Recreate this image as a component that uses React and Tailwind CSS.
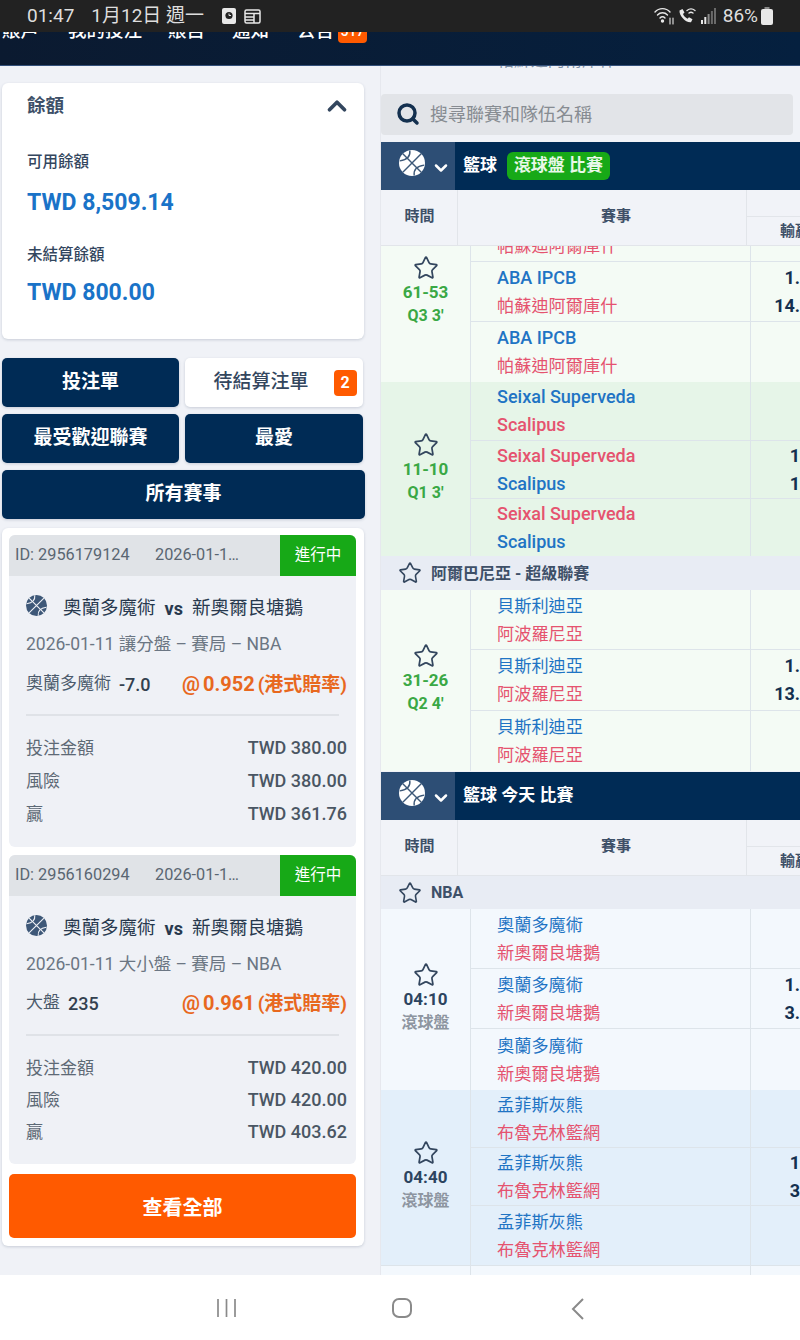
import { ChevronDown, ChevronUp, Search, Star } from "lucide-react";

const blue = "text-[#1f74c4]";
const pink = "text-[#e5536f]";

function BallIcon({ size, fg, line, className }) {
  return (
    <svg className={className} width={size} height={size} viewBox="0 0 24 24" fill="none">
      <circle cx="12" cy="12" r="12" fill={fg} />
      <g stroke={line} strokeWidth="1.300">
        <path d="M3.500 3.500 20.500 20.500M20.500 3.500 3.500 20.500" />
        <path d="M10 .5C10.500 5 8 9 .8 10" />
        <path d="M23.200 14C16 15 13.500 19 14 23.500" />
      </g>
    </svg>
  );
}

function StatusBar() {
  return (
    <div className="flex h-8 shrink-0 items-center bg-[#222222] pl-[27px] pr-[27px] text-[19px] text-[#dedede]">
      <span>01:47</span>
      <span className="ml-[17px]">1月12日 週一</span>
      <svg className="ml-[18px]" width="14" height="16" viewBox="0 0 14 16">
        <rect width="14" height="16" rx="2" fill="#e8e8e8" />
        <circle cx="7" cy="7.500" r="3.600" fill="#222" />
        <path d="M7 5.500v2h2" stroke="#e8e8e8" strokeWidth="1" fill="none" />
      </svg>
      <svg className="ml-[8px]" width="17" height="15" viewBox="0 0 17 15" fill="none" stroke="#e8e8e8" strokeWidth="1.500">
        <rect x="1" y="1" width="15" height="13" rx="1.500" />
        <path d="M1 4.500h15M1 8h9M1 11h9M10 4.500V14" />
      </svg>
      <div className="flex-1" />
      <svg width="22" height="20" viewBox="0 0 22 20" fill="none" stroke="#e8e8e8" strokeWidth="1.400" strokeLinecap="round">
        <path d="M1 6c4-4.500 11-4.500 15 0M3.500 9c2.800-3 7.200-3 10 0M6 12c1.500-1.600 3.500-1.600 5 0" />
        <circle cx="8.500" cy="15" r="1" fill="#e8e8e8" />
        <path d="M16 12v6M19 18v-6" strokeWidth="1.100" />
      </svg>
      <svg className="ml-[2px]" width="18" height="18" viewBox="0 0 18 18" fill="none">
        <path d="M1.500 3.500 4.500 2l2 3.500-1.500 1.500c.8 2 2.500 3.800 4.500 4.700l1.500-1.500 3.500 2-1.500 3C8 16 1 9 1.500 3.500Z" fill="#e8e8e8" />
        <path d="M9 3.500c2.500-2 5.500-2 8 0M11 6c1.300-1 2.700-1 4 0" stroke="#e8e8e8" strokeWidth="1.300" strokeLinecap="round" />
      </svg>
      <svg className="ml-[5px]" width="15" height="16" viewBox="0 0 15 16">
        <rect x="0" y="12" width="2" height="4" fill="#e8e8e8" />
        <rect x="3.300" y="9" width="2" height="7" fill="#e8e8e8" />
        <rect x="6.600" y="6" width="2" height="10" fill="#8a8a8a" />
        <rect x="9.900" y="3" width="2" height="13" fill="#6a6a6a" />
        <rect x="13" y="0" width="2" height="16" fill="#6a6a6a" />
      </svg>
      <span className="ml-[7px]">86%</span>
      <svg className="ml-[3px]" width="12" height="18" viewBox="0 0 12 18">
        <rect x="3.500" y="0" width="5" height="3" fill="#8a8a8a" />
        <rect x="0" y="2" width="12" height="16" rx="2" fill="#e8e8e8" />
      </svg>
    </div>
  );
}

function NavBar() {
  return (
    <div className="h-[34px] shrink-0 overflow-hidden border-b border-[#33507a] bg-gradient-to-r from-[#0b1a30] to-[#05203f]">
      <div className="-mt-[13px] flex h-[24px] items-center text-[18.500px] font-medium leading-[18px] text-white">
        <span className="ml-[2px] w-[66px]">賬戶</span>
        <span className="w-[100px]">我的投注</span>
        <span className="w-[64px]">賬目</span>
        <span className="w-[65px]">通知</span>
        <span className="w-[41px]">公告</span>
        <span className="h-[24px] w-[29px] rounded-[4px] bg-[#ff5a00] text-center text-[14px] leading-[24px]">517</span>
      </div>
    </div>
  );
}

function NavButton({ children, light, badge, wide, right }) {
  return (
    <div
      className={`flex h-[49px] items-center justify-center rounded-[5px] text-[19px] font-bold shadow-[0_1px_3px_rgba(40,60,90,0.2)] ${
        light ? "bg-white text-[#33465e]" : "bg-[#002b55] text-white"
      } ${wide ? "w-[363px]" : right ? "w-[178px]" : "w-[177px]"}`}
    >
      <span className={badge ? "ml-[22px] font-medium" : ""}>{children}</span>
      {badge && (
        <span className="ml-[25px] flex h-[26px] w-[23px] items-center justify-center rounded-[4px] bg-[#ff5a00] text-[16px] text-white">
          {badge}
        </span>
      )}
    </div>
  );
}

function Ticket({ id, market, sel, line, odds, stake, win, tight }) {
  return (
    <div className="overflow-hidden rounded-[6px] bg-[#eff1f6]">
      <div className="flex h-[41px] bg-[#e0e3e7] text-[16.300px] text-[#5a6672]">
        <div className="flex flex-1 items-center pl-[6px]">
          <span className="w-[140px]">ID: {id}</span>
          <span>2026-01-1…</span>
        </div>
        <div className="flex w-[76px] items-center justify-center bg-[#17a917] text-[15.500px] text-white">進行中</div>
      </div>
      <div className={`px-[17px] ${tight ? "pb-[20px]" : "pb-[21px]"}`}>
        <div className="flex h-[63px] items-center pt-[2px]">
          <BallIcon className="-mt-[6px]" size={21} fg="#3e5878" line="#eff1f6" />
          <span className="ml-[16px] text-[18.500px] text-[#28394e]">奧蘭多魔術</span>
          <span className="ml-[9px] text-[18px] font-bold text-[#28394e]">vs</span>
          <span className="ml-[9px] text-[18.500px] text-[#28394e]">新奧爾良塘鵝</span>
        </div>
        <div className="flex h-[10px] items-center whitespace-nowrap text-[17.500px] text-[#6b7683]">2026-01-11 {market} – 賽局 – NBA</div>
        <div className={`${tight ? "mt-[22px]" : "mt-[23px]"} flex h-[24px] items-center justify-between`}>
          <div className="flex items-center text-[17px] text-[#4c5b6c]">
            {sel}
            <span className="ml-[8px] text-[18px] font-medium text-[#33404f]">{line}</span>
          </div>
          <span className="-mr-[8px] text-[20px] font-bold text-[#e8681e]">
            <span className="mr-[3px]">@</span>
            {odds} <span className="-ml-[2px] text-[19px]">(港式賠率)</span>
          </span>
        </div>
        <div className={`${tight ? "mt-[19px]" : "mt-[18px]"} h-[2px] w-[313px] bg-[#dfe2e7]`} />
        <div className={`-mr-[8px] mt-[20px] flex flex-col ${tight ? "gap-[8px]" : "gap-[9px]"} text-[17px] leading-[24px] text-[#5d6975]`}>
          {[
            ["投注金額", stake],
            ["風險", stake],
            ["贏", win],
          ].map(([label, value]) => (
            <div key={label} className="flex justify-between">
              <span>{label}</span>
              <span className="text-[18px] font-medium text-[#4a5663]">TWD {value}</span>
            </div>
          ))}
        </div>
      </div>
    </div>
  );
}

function LeftColumn() {
  return (
    <div className="flex w-[381px] shrink-0 flex-col pl-[2px] pt-[17px]">
      <div className="h-[256px] w-[362px] rounded-[6px] bg-white px-[25px] shadow-[0_1px_3px_rgba(40,60,90,0.2)]">
        <div className="flex h-[48px] items-center justify-between">
          <span className="text-[18.500px] font-bold text-[#3e5068]">餘額</span>
          <ChevronUp className="-mr-[13px] -mt-[3px]" size={30} strokeWidth={3} color="#33465e" />
        </div>
        <div className="mt-[20px] text-[15.500px] font-medium leading-[22px] text-[#33465e]">可用餘額</div>
        <div className="mt-[15px] text-[23px] font-bold leading-[30px] text-[#1a73c8]">TWD 8,509.14</div>
        <div className="mt-[26px] text-[15.500px] font-medium leading-[22px] text-[#33465e]">未結算餘額</div>
        <div className="mt-[12px] text-[23px] font-bold leading-[30px] text-[#1a73c8]">TWD 800.00</div>
      </div>
      <div className="mt-[19px] flex flex-col gap-[7px]">
        <div className="flex gap-[6px]">
          <NavButton>投注單</NavButton>
          <NavButton light badge="2" right>待結算注單</NavButton>
        </div>
        <div className="flex gap-[6px]">
          <NavButton>最受歡迎聯賽</NavButton>
          <NavButton right>最愛</NavButton>
        </div>
        <NavButton wide>所有賽事</NavButton>
      </div>
      <div className="mt-[9px] flex h-[718px] w-[362px] flex-col gap-[8px] rounded-[6px] bg-white pl-[7px] pr-[8px] pt-[7px] shadow-[0_1px_3px_rgba(40,60,90,0.2)]">
        <Ticket id="2956179124" market="讓分盤" sel="奧蘭多魔術" line="-7.0" odds="0.952" stake="380.00" win="361.76" />
        <Ticket id="2956160294" market="大小盤" sel="大盤" line="235" odds="0.961" stake="420.00" win="403.62" tight />
        <div className="mt-[2px] flex h-[64px] items-center justify-center rounded-[5px] bg-[#ff5a00] pt-[3px] text-[20px] font-bold text-white">
          查看全部
        </div>
      </div>
    </div>
  );
}

function TeamName({ name, color }) {
  const latin = /[a-z]/i.test(name);
  return <span className={`${color} ${latin ? "text-[18px] font-medium" : "text-[17.200px] font-normal"}`}>{name}</span>;
}

function Row({ teams, odds, h, flip, last }) {
  const colors = flip ? [pink, blue] : [blue, pink];
  return (
    <div className={`flex ${h} ${last ? "" : "border-b border-[#dde4ea]"}`}>
      <div className="flex w-[279px] flex-col justify-center pl-[26px] leading-[28px]">
        <TeamName name={teams[0]} color={colors[0]} />
        <TeamName name={teams[1]} color={colors[1]} />
      </div>
      <div className="flex w-[50px] flex-col items-end justify-center overflow-hidden border-l border-[#dde4ea] text-[18px] font-bold leading-[28px] text-[#14304f]">
        {odds?.map((o) => (
          <span key={o}>{o}</span>
        ))}
      </div>
    </div>
  );
}

function Group({ bg, teams, star, scoreClass, top, bottom, heights, odds, flips }) {
  return (
    <div className={`flex ${bg}`}>
      <div className="flex w-[90px] shrink-0 flex-col items-center justify-center border-r border-[#dde4ea] pb-[2px]">
        <Star size={star} strokeWidth={1.6} color="#33465e" />
        <span className={`-mt-[1px] text-[17px] font-bold leading-[24px] ${scoreClass}`}>{top}</span>
        <span className={`text-[16px] font-bold leading-[24px] ${scoreClass === "text-[#2c4460]" ? "text-[#8d95a0]" : scoreClass}`}>{bottom}</span>
      </div>
      <div className="flex-1">
        {heights.map((h, i) => (
          <Row
            key={i}
            h={h}
            teams={teams}
            odds={odds[i]}
            flip={flips ? flips[i] : false}
            last={i === heights.length - 1}
          />
        ))}
      </div>
    </div>
  );
}

function League({ name, h }) {
  return (
    <div className={`flex ${h} items-center bg-[#e8ecf4] pl-[17px] text-[16px] font-bold text-[#3e5068]`}>
      <Star size={24} strokeWidth={1.6} color="#33465e" />
      <span className="ml-[9px] pt-[1px]">{name}</span>
    </div>
  );
}

function SportHeader({ children }) {
  return (
    <div className="flex h-[48px] shrink-0 bg-[#002b55]">
      <div className="flex w-[74px] items-center bg-[#2d4e75] pl-[18px]">
        <BallIcon className="-mt-[7px]" size={26} fg="#ffffff" line="#3c5878" />
        <ChevronDown className="ml-[6px] mt-[3px]" size={20} strokeWidth={3} color="#fff" />
      </div>
      <div className="flex items-center pl-[8px] text-[17px] font-bold text-white">{children}</div>
    </div>
  );
}

function TableHead() {
  return (
    <div className="flex h-[56px] shrink-0 border-b border-[#e2e5ea] bg-[#f1f3f8] text-[15px] font-bold text-[#3e5068]">
      <div className="flex w-[77px] shrink-0 items-center justify-center border-r border-[#e2e5ea] pb-[3px] pl-[1px]">時間</div>
      <div className="flex w-[289px] shrink-0 items-center justify-center border-r border-[#e2e5ea] pb-[3px] pl-[28px]">賽事</div>
      <div className="flex flex-1 flex-col overflow-hidden">
        <div className="h-[27px] border-b border-[#e2e5ea]" />
        <div className="flex flex-1 items-center whitespace-nowrap pl-[33px]">輸贏</div>
      </div>
    </div>
  );
}

function ClipText({ h, className, children }) {
  return (
    <div className={`${h} overflow-hidden pl-[116px] text-[17px] leading-[17px] ${className}`}>
      <div className="-mt-[14px]">{children}</div>
    </div>
  );
}

function RightColumn() {
  const aba = ["ABA IPCB", "帕蘇迪阿爾庫什"];
  const sx = ["Seixal Superveda", "Scalipus"];
  const alb = ["貝斯利迪亞", "阿波羅尼亞"];
  const orl = ["奧蘭多魔術", "新奧爾良塘鵝"];
  const mem = ["孟菲斯灰熊", "布魯克林籃網"];
  return (
    <div className="-ml-[1px] flex min-w-0 flex-1 flex-col overflow-hidden border-l border-[#e6e8ee]">
      <ClipText h="h-[3px]" className="text-[#7d8ea3]">帕蘇迪阿爾庫什</ClipText>
      <div className="mr-[7px] mt-[25px] flex h-[41px] shrink-0 items-center rounded-[4px] bg-[#e2e4e8] pb-[1px] pl-[15px] text-[18px] text-[#878c92]">
        <Search size={24} strokeWidth={3.5} color="#14304f" />
        <span className="ml-[10px]">搜尋聯賽和隊伍名稱</span>
      </div>
      <div className="mt-[7px]">
        <SportHeader>
          籃球
          <span className="ml-[10px] flex h-[28px] w-[103px] items-center justify-center rounded-[6px] bg-[#17a917] text-[#e8f8e8]">滾球盤 比賽</span>
        </SportHeader>
      </div>
      <TableHead />
      <div className="min-h-0 flex-1 overflow-hidden">
        <div className="-mt-[44px]">
          <Group
            bg="bg-[#f4fbf5]"
            star={26}
            scoreClass="text-[#3aa845]"
            top="61-53"
            bottom="Q3 3'"
            teams={aba}
            heights={["h-[60px]", "h-[60px]", "h-[60px]"]}
            odds={[[], ["1.", "14."], []]}
          />
          <Group
            bg="bg-[#e6f5e8]"
            star={26}
            scoreClass="text-[#3aa845]"
            top="11-10"
            bottom="Q1 3'"
            teams={sx}
            heights={["h-[59px]", "h-[58px]", "h-[57px]"]}
            odds={[[], ["1", "1 "], []]}
            flips={[false, true, true]}
          />
          <League name="阿爾巴尼亞 - 超級聯賽" h="h-[34px]" />
          <Group
            bg="bg-[#f4fbf5]"
            star={26}
            scoreClass="text-[#3aa845]"
            top="31-26"
            bottom="Q2 4'"
            teams={alb}
            heights={["h-[60px]", "h-[61px]", "h-[60px]"]}
            odds={[[], ["1.", "13."], []]}
          />
          <div className="mt-[1px]">
            <SportHeader>籃球 今天 比賽</SportHeader>
          </div>
          <TableHead />
          <League name="NBA" h="h-[33px]" />
          <Group
            bg="bg-[#f3f8fd]"
            star={26}
            scoreClass="text-[#2c4460]"
            top="04:10"
            bottom="滾球盤"
            teams={orl}
            heights={["h-[60px]", "h-[60px]", "h-[61px]"]}
            odds={[[], ["1.", "3."], []]}
          />
          <Group
            bg="bg-[#e3effa]"
            star={26}
            scoreClass="text-[#2c4460]"
            top="04:40"
            bottom="滾球盤"
            teams={mem}
            heights={["h-[58px]", "h-[58px]", "h-[59px]"]}
            odds={[[], ["1", "3"], []]}
          />
          <div className="flex h-[30px] border-t border-[#dde4ea] bg-[#f3f8fd]">
            <div className="w-[90px] border-r border-[#dde4ea]" />
            <div className="w-[279px] pl-[26px] pt-[4px] text-[17.200px] leading-[28px] text-[#e5536f]">迪特爾坦茲老</div>
            <div className="border-l border-[#dde4ea]" />
          </div>
        </div>
      </div>
    </div>
  );
}

function BottomNav() {
  return (
    <div className="flex h-[65px] shrink-0 items-start justify-center bg-white pt-[23px]">
      <svg width="21" height="20" viewBox="0 0 21 20" stroke="#8a8a8a" strokeWidth="1.700">
        <path d="M2 1v18M10.500 1v18M19 1v18" />
      </svg>
      <svg className="ml-[154px]" width="22" height="20" viewBox="0 0 22 20" fill="none" stroke="#8a8a8a" strokeWidth="2">
        <rect x="2" y="1" width="18" height="18" rx="6" />
      </svg>
      <svg className="ml-[158px]" width="14" height="22" viewBox="0 0 14 22" fill="none" stroke="#8a8a8a" strokeWidth="2">
        <path d="M12 1 2 11l10 10" />
      </svg>
    </div>
  );
}

export default function App() {
  return (
    <div
      className="flex h-[1340px] w-[800px] flex-col overflow-hidden bg-[#f0f2f7]"
      style={{ fontFamily: "Roboto, 'Noto Sans CJK TC', sans-serif" }}
    >
      <StatusBar />
      <NavBar />
      <div className="flex min-h-0 flex-1">
        <LeftColumn />
        <RightColumn />
      </div>
      <BottomNav />
    </div>
  );
}
